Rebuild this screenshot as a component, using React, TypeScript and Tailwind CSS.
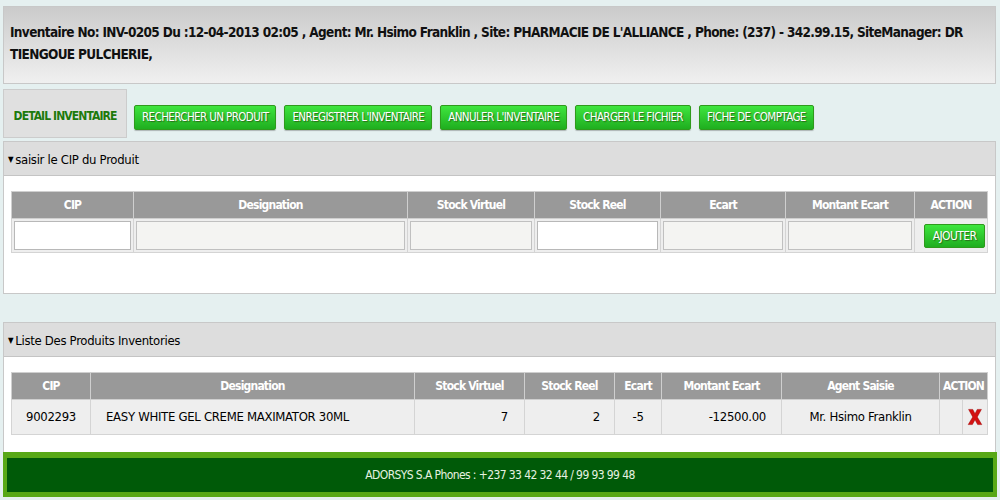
import React from "react"

const cond = "font-['DejaVu_Sans_Condensed','DejaVu_Sans',sans-serif]"

function GreenButton({ label }: { label: string }) {
  return (
    <button className="h-[25px] px-[7px] whitespace-nowrap rounded-[2px] border border-[#2f9a1c] bg-gradient-to-b from-[#3ee63e] to-[#1fae1f] text-[11.5px] tracking-[-0.6px] text-white [text-shadow:1px_1px_1px_#2b6b1b] shadow-[0_1px_1px_rgba(0,0,0,0.25)]">
      {label}
    </button>
  )
}

function PanelHeader({ title }: { title: string }) {
  return (
    <div className="h-[34px] flex items-center gap-[2px] px-[4px] pt-[3px] bg-[#dddddd] border-b border-[#c4c4c4] text-[13px] tracking-[-0.3px] text-black">
      <span className="text-[8px] leading-none">▼</span>
      <span>{title}</span>
    </div>
  )
}

const th = "bg-[#999999] text-white font-bold text-[12px] tracking-[-0.8px] border border-[#cfcfcf] h-[27px] text-center whitespace-nowrap"
const td = "bg-[#eeeeee] border border-[#d4d4d4] text-[13px] tracking-[-0.3px] text-black whitespace-nowrap"

export default function App() {
  return (
    <div className={`${cond} w-[1000px] h-[500px] bg-[#e5f0f0] pt-[6px] px-[3px] flex flex-col`}>
      {/* en-tete */}
      <div className="h-[78px] w-[993px] border border-[#c8c8c8] bg-gradient-to-b from-[#cbcbcb] to-[#f0f0f0] flex items-center px-[6px]">
        <p className="font-bold text-[13.5px] tracking-[-0.65px] leading-[22px] text-[#111] pb-[4px]">
          Inventaire No: INV-0205 Du :12-04-2013 02:05 , Agent: Mr. Hsimo Franklin , Site: PHARMACIE DE L'ALLIANCE , Phone: (237) - 342.99.15, SiteManager: DR TIENGOUE PULCHERIE,
        </p>
      </div>

      {/* onglets */}
      <div className="flex items-end mt-[5px] h-[49px]">
        <div className="h-[49px] w-[124px] pt-[5px] bg-[#e0e0e0] border border-[#cccccc] flex items-center justify-center whitespace-nowrap font-bold text-[12px] tracking-[-0.9px] text-[#1d7a0c]">
          DETAIL INVENTAIRE
        </div>
        <div className="flex gap-[8px] ml-[7px] mb-[8px]">
          <GreenButton label="RECHERCHER UN PRODUIT" />
          <GreenButton label="ENREGISTRER L'INVENTAIRE" />
          <GreenButton label="ANNULER L'INVENTAIRE" />
          <GreenButton label="CHARGER LE FICHIER" />
          <GreenButton label="FICHE DE COMPTAGE" />
        </div>
      </div>

      {/* saisie */}
      <div className="mt-[3px] w-[993px] h-[153px] bg-white border border-[#c8c8c8]">
        <PanelHeader title="saisir le CIP du Produit" />
        <div className="px-[7px] pt-[15px]">
          <table className="w-[976px] table-fixed border-collapse">
            <colgroup>
              <col className="w-[122px]" />
              <col className="w-[274px]" />
              <col className="w-[127px]" />
              <col className="w-[126px]" />
              <col className="w-[125px]" />
              <col className="w-[129px]" />
              <col className="w-[73px]" />
            </colgroup>
            <thead>
              <tr>
                {["CIP", "Designation", "Stock Virtuel", "Stock Reel", "Ecart", "Montant Ecart", "ACTION"].map((h) => (
                  <th key={h} className={th}>{h}</th>
                ))}
              </tr>
            </thead>
            <tbody>
              <tr>
                <td className={`${td} h-[34px] px-[2px]`}>
                  <input className="w-full h-[29px] bg-white border border-[#b8b8b8]" />
                </td>
                <td className={`${td} px-[2px]`}>
                  <input disabled className="w-full h-[29px] bg-[#f4f4f2] border border-[#c0c0c0]" />
                </td>
                <td className={`${td} px-[2px]`}>
                  <input disabled className="w-full h-[29px] bg-[#f4f4f2] border border-[#c0c0c0]" />
                </td>
                <td className={`${td} px-[2px]`}>
                  <input className="w-full h-[29px] bg-white border border-[#b8b8b8]" />
                </td>
                <td className={`${td} px-[2px]`}>
                  <input disabled className="w-full h-[29px] bg-[#f4f4f2] border border-[#c0c0c0]" />
                </td>
                <td className={`${td} px-[2px]`}>
                  <input disabled className="w-full h-[29px] bg-[#f4f4f2] border border-[#c0c0c0]" />
                </td>
                <td className={`${td} text-right pr-[2px]`}>
                  <button className="h-[24px] w-[61px] rounded-[2px] border border-[#2f9a1c] bg-gradient-to-b from-[#3ee63e] to-[#1fae1f] text-[12px] tracking-[-0.6px] text-white [text-shadow:1px_1px_1px_#2b6b1b]">
                    AJOUTER
                  </button>
                </td>
              </tr>
            </tbody>
          </table>
        </div>
      </div>

      {/* liste */}
      <div className="mt-[28px] w-[993px] h-[131px] bg-white border border-[#c8c8c8] border-b-0">
        <PanelHeader title="Liste Des Produits Inventories" />
        <div className="px-[7px] pt-[15px]">
          <table className="w-[976px] table-fixed border-collapse">
            <colgroup>
              <col className="w-[79px]" />
              <col className="w-[324px]" />
              <col className="w-[110px]" />
              <col className="w-[90px]" />
              <col className="w-[47px]" />
              <col className="w-[120px]" />
              <col className="w-[158px]" />
              <col className="w-[23px]" />
              <col className="w-[25px]" />
            </colgroup>
            <thead>
              <tr>
                <th className={th}>CIP</th>
                <th className={th}>Designation</th>
                <th className={th}>Stock Virtuel</th>
                <th className={th}>Stock Reel</th>
                <th className={th}>Ecart</th>
                <th className={th}>Montant Ecart</th>
                <th className={th}>Agent Saisie</th>
                <th colSpan={2} className={th}>ACTION</th>
              </tr>
            </thead>
            <tbody>
              <tr>
                <td className={`${td} h-[35px] text-center`}>9002293</td>
                <td className={`${td} pl-[15px]`}>EASY WHITE GEL CREME MAXIMATOR 30ML</td>
                <td className={`${td} text-right pr-[16px]`}>7</td>
                <td className={`${td} text-right pr-[14px]`}>2</td>
                <td className={`${td} text-center`}>-5</td>
                <td className={`${td} text-right pr-[15px]`}>-12500.00</td>
                <td className={`${td} text-center`}>Mr. Hsimo Franklin</td>
                <td className={td}></td>
                <td className={`${td} text-center`}>
                  <svg viewBox="0 0 20 22" className="w-[16px] h-[20px] inline-block align-middle">
                    <path d="M2 1.5 L7.2 1.5 L10 7 L12.8 1.5 L18 1.5 L12.8 11 L18.5 20.5 L13.3 20.5 L10 14.5 L6.7 20.5 L1.5 20.5 L7.2 11 Z" fill="#d41212" stroke="#9c0000" strokeWidth="0.6" />
                  </svg>
                </td>
              </tr>
            </tbody>
          </table>
        </div>
      </div>

      {/* pied */}
      <div className="w-[994px] h-[45px] bg-[#58a817] pt-[6px] pb-[5px] px-[4px] -mt-[1px]">
        <div className="h-full bg-[#005a08] flex items-center justify-center text-[12px] tracking-[-0.6px] text-[#e6f2e0]">
          ADORSYS S.A Phones : +237 33 42 32 44 / 99 93 99 48
        </div>
      </div>
    </div>
  )
}
